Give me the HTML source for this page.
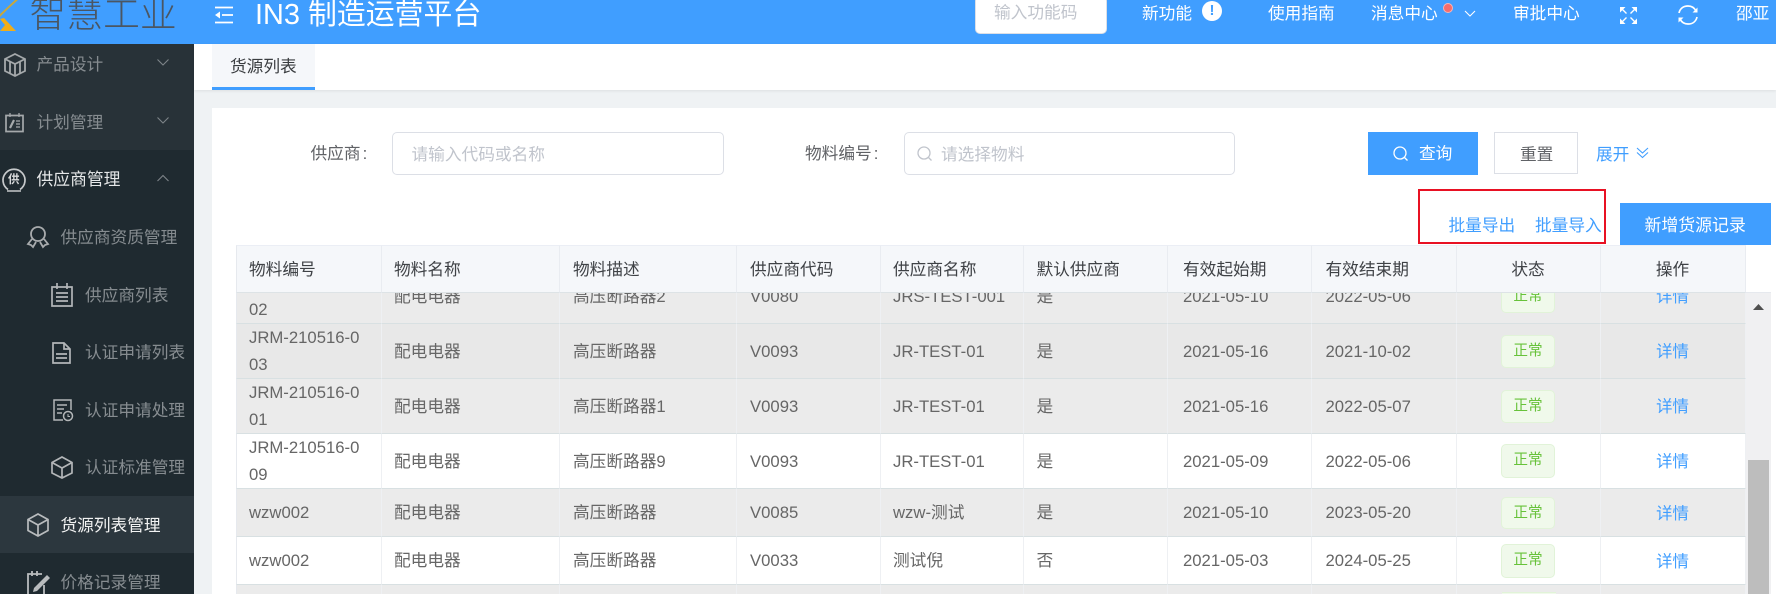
<!DOCTYPE html>
<html lang="zh"><head><meta charset="utf-8"><title>货源列表</title>
<style>
*{box-sizing:border-box}
html,body{margin:0;padding:0;width:1776px;height:594px;overflow:hidden;background:#fff}
body{position:relative;font-family:"Liberation Sans","Noto Sans CJK SC",sans-serif;font-size:16.7px;color:#606266}
.a{position:absolute}
.t{position:absolute;white-space:nowrap;line-height:20px;height:20px}
.w{color:#fff}.b{color:#409eff}.ph{color:#c0c4cc}
.m{color:#868c90}.mw{color:#e6e8e9}
svg{position:absolute;overflow:visible;fill:none}
table{border-collapse:separate;border-spacing:0;table-layout:fixed;position:absolute;left:236px;width:1509.500px}
td{padding:0 0 0 12.500px;border-right:1px solid #eef0f3;border-bottom:1px solid #d8e0e2;line-height:27px;font-size:16.7px;color:#666;overflow:hidden;vertical-align:middle;white-space:nowrap}
td.l{border-left:1px solid #e6e9ee;padding-left:12px}
td:nth-child(2){padding-left:12px}
td:nth-child(3),td:nth-child(4),td:nth-child(8){padding-left:13.500px}
td:nth-child(7){padding-left:15px}
td.c{padding:0;text-align:center}
tr.g td{background:#ebebeb}tr.h td{background:#e8e8e8}tr.n td{background:#fff}
tr.e td{border-bottom:0;line-height:0;font-size:0;height:9px}
.tag{display:inline-block;width:54px;height:33px;line-height:30px;background:#f0f9eb;border:1px solid #e1f3d8;border-radius:5px;color:#67c23a;font-size:14.6px;text-align:center;vertical-align:middle}
.d{color:#409eff;font-size:16.4px;position:relative;top:1px}
.th{position:absolute;top:245px;height:48px;background:#f5f7fa;border-top:1px solid #ebeef5;border-right:1px solid #e9ecf1;border-bottom:1px solid #dde3e6;line-height:48px;color:#3f4246;padding-left:12.500px;white-space:nowrap}
</style></head><body>

<!-- top bar -->
<div class="a" style="left:0;top:0;width:1776px;height:44px;background:#409eff"></div>
<svg style="left:0;top:0" width="18" height="32"><polygon points="15,0 0,14 0,17 8,9 18,0" fill="#c9a83a"/><polygon points="0,19 4,18 16,31 0,31 5,25" fill="#f0ad1a"/></svg>
<div class="t" style="left:29.500px;top:-5px;font-size:36.800px;line-height:40px;height:40px;color:#4a5663;font-weight:300">智慧工业</div>
<svg style="left:215px;top:6px" width="18" height="18" stroke="#fff" stroke-width="1.7"><path d="M0 1.500H18M7 9H18M0 16.500H18"/><path d="M5 5.500L0 9L5 12.500Z" fill="#fff" stroke="none"/></svg>
<div class="t w" style="left:255px;top:-3px;font-size:28.900px;line-height:36px;height:36px">IN3 制造运营平台</div>

<div class="a" style="left:975px;top:-4px;width:132px;height:38px;background:#fff;border:1px solid #dcdfe6;border-radius:5px"></div>
<div class="t ph" style="left:994px;top:3px">输入功能码</div>
<div class="t w" style="left:1142px;top:3.500px">新功能</div>
<div class="a" style="left:1202px;top:1px;width:20px;height:20px;border-radius:50%;background:#fff;color:#409eff;font-size:15px;line-height:19px;text-align:center;font-weight:bold">!</div>
<div class="t w" style="left:1268px;top:4px">使用指南</div>
<div class="t w" style="left:1371px;top:4px">消息中心</div>
<div class="a" style="left:1443px;top:3px;width:10px;height:10px;border-radius:50%;background:#f56c6c;border:1px solid #f7b4b4"></div>
<svg style="left:1464px;top:10px" width="12" height="7" stroke="#fff" stroke-width="1.1"><path d="M1 1L6 6L11 1"/></svg>
<div class="t w" style="left:1513px;top:4px">审批中心</div>
<svg style="left:1620px;top:7px" width="17" height="17" stroke="#fff" stroke-width="1.400"><path d="M2 2L6.500 6.500M15 2L10.500 6.500M2 15L6.500 10.500M15 15L10.500 10.500"/><path d="M0 0H5.500L0 5.500ZM17 0H11.500L17 5.500ZM0 17H5.500L0 11.500ZM17 17H11.500L17 11.500Z" fill="#fff" stroke="none"/></svg>
<svg style="left:1678px;top:5px" width="20" height="20" stroke="#fff" stroke-width="1.700"><path d="M1 8C2 3.500 5.500 1 10 1C13.500 1 16.500 3 18 6M19 12C18 16.500 14.500 19 10 19C6.500 19 3.500 17 2 14"/><path d="M19.500 2.500V7.500H14.500ZM.5 17.500V12.500H5.500Z" fill="#fff" stroke="none"/></svg>
<div class="t w" style="left:1736px;top:4px">邵亚</div>

<!-- sidebar -->
<div class="a" style="left:0;top:44px;width:194px;height:550px;background:#1f2a30"></div>
<div class="a" style="left:0;top:44px;width:194px;height:106px;background:#283238"></div>
<div class="a" style="left:0;top:496px;width:194px;height:57px;background:#2c373e"></div>

<svg style="left:4px;top:53px" width="22" height="24" stroke="#a5a9ab" stroke-width="1.8"><path d="M11 1L21 6V18L11 23L1 18V6ZM1 6L11 11L21 6M11 11V23M6 9V20M16 9V20"/></svg>
<div class="t m" style="left:36.500px;top:55px">产品设计</div>
<svg style="left:157px;top:59px" width="12" height="7" stroke="#7e8589" stroke-width="1.100"><path d="M.5 .5L6 6L11.500 .5"/></svg>

<svg style="left:5px;top:113px" width="19" height="19" stroke="#a5a9ab" stroke-width="1.700"><path d="M1 2.500H18V18.500H1Z"/><path d="M5 0V4M14 0V4M11 8H15M11 11H15M11 14H15" stroke-width="1.300"/><path d="M5 15L9 7" stroke-width="2.200"/></svg>
<div class="t m" style="left:36.500px;top:113px">计划管理</div>
<svg style="left:157px;top:117px" width="12" height="7" stroke="#7e8589" stroke-width="1.100"><path d="M.5 .5L6 6L11.500 .5"/></svg>

<svg style="left:2px;top:168px" width="24" height="24" stroke="#c6c9cb" stroke-width="1.700"><path d="M6 21.500A11 11 0 1 1 18 21.500"/><path d="M5 23H19" stroke-width="1.500"/></svg>
<div class="t" style="left:8px;top:170px;font-size:11.500px;color:#d9dbdc;font-weight:bold">供</div>
<div class="t mw" style="left:36.500px;top:170px;font-size:16.800px">供应商管理</div>
<svg style="left:157px;top:175px" width="12" height="7" stroke="#7e8589" stroke-width="1.100"><path d="M.5 6L6 .5L11.500 6"/></svg>

<svg style="left:27px;top:226px" width="22" height="22" stroke="#a8abad" stroke-width="1.800"><circle cx="11" cy="8" r="7"/><path d="M5 13L1 18L4 19L6 21L9 16M17 13L21 18L18 19L16 21L13 16"/></svg>
<div class="t m" style="left:60.500px;top:228px">供应商资质管理</div>

<svg style="left:51px;top:283px" width="22" height="24" stroke="#b3b6b8" stroke-width="1.700"><path d="M1 4H21V23H1ZM6 0V6M16 0V6M5 10H17M5 14H17M5 18H17"/></svg>
<div class="t m" style="left:85px;top:286px">供应商列表</div>

<svg style="left:52px;top:342px" width="19" height="22" stroke="#b3b6b8" stroke-width="1.700"><path d="M1 1H12L18 7V21H1ZM12 1V7H18M4 12H15M4 16H15"/></svg>
<div class="t m" style="left:85px;top:343px">认证申请列表</div>

<svg style="left:53px;top:399px" width="20" height="22" stroke="#b3b6b8" stroke-width="1.500"><path d="M10 21H1V1H18V11M4 6H14M4 10H11M4 14H9"/><circle cx="15" cy="17" r="4.500"/><path d="M15 15V17.500H17" stroke-width="1"/></svg>
<div class="t m" style="left:85px;top:400.500px">认证申请处理</div>

<svg style="left:51px;top:456px" width="22" height="23" stroke="#b3b6b8" stroke-width="1.700"><path d="M11 1L21 6.500V17L11 22L1 17V6.500ZM1 6.500L11 12L21 6.500M11 12V22"/></svg>
<div class="t m" style="left:85px;top:458px">认证标准管理</div>

<svg style="left:27px;top:513px" width="22" height="24" stroke="#b9bcbe" stroke-width="1.700"><path d="M11 1L21 6.500V17.500L11 23L1 17.500V6.500ZM1 6.500L11 12L21 6.500M11 12V23"/></svg>
<div class="t" style="left:60.500px;top:516px;color:#f2f3f3">货源列表管理</div>

<svg style="left:26px;top:571px;overflow:hidden" width="24" height="23" stroke="#b9bcbe" stroke-width="1.800"><path d="M16 3H2V24H18V14M6 0V5M11 0V5"/><path d="M8 17L21 4L24 7L11 20L7 21Z" fill="#b9bcbe" stroke="none"/></svg>
<div class="t m" style="left:60.500px;top:573px">价格记录管理</div>

<!-- tabs + page bg -->
<div class="a" style="left:194px;top:44px;width:1582px;height:550px;background:#eff2f4"></div>
<div class="a" style="left:194px;top:44px;width:1582px;height:46px;background:#fff;box-shadow:0 1px 3px rgba(0,0,0,.08)"></div>
<div class="a" style="left:212px;top:44px;width:103px;height:46px;background:#f5f7fa;border-bottom:3px solid #409eff"></div>
<div class="t" style="left:230px;top:57px;color:#3a3d40">货源列表</div>
<div class="a" style="left:212px;top:108px;width:1564px;height:486px;background:#fff"></div>

<!-- filter form -->
<div class="t" style="left:310.500px;top:144px">供应商<span style="margin-left:2px">:</span></div>
<div class="a" style="left:392px;top:132px;width:332px;height:43px;border:1px solid #dcdfe6;border-radius:5px"></div>
<div class="t ph" style="left:411.500px;top:145px">请输入代码或名称</div>
<div class="t" style="left:805px;top:144px">物料编号<span style="margin-left:2px">:</span></div>
<div class="a" style="left:904px;top:132px;width:331px;height:43px;border:1px solid #dcdfe6;border-radius:5px"></div>
<svg style="left:917px;top:146px" width="16" height="16" stroke="#c0c4cc" stroke-width="1.300"><circle cx="7" cy="7" r="6"/><path d="M11.500 11.500L14.500 14.500"/></svg>
<div class="t ph" style="left:941px;top:145px">请选择物料</div>
<div class="a" style="left:1368px;top:132px;width:110px;height:43px;background:#409eff"></div>
<svg style="left:1393px;top:146px" width="16" height="16" stroke="#fff" stroke-width="1.300"><circle cx="7" cy="7" r="6"/><path d="M11.500 11.500L14.500 14.500"/></svg>
<div class="t w" style="left:1419px;top:144px">查询</div>
<div class="a" style="left:1494px;top:132px;width:84px;height:42px;border:1px solid #dcdfe6"></div>
<div class="t" style="left:1520px;top:145px">重置</div>
<div class="t b" style="left:1596px;top:145px">展开</div>
<svg style="left:1636px;top:147px" width="13" height="12" stroke="#409eff" stroke-width="1.100"><path d="M1 1L6.500 6L12 1M1 5.500L6.500 10.500L12 5.500"/></svg>

<div class="t b" style="left:1448.500px;top:215.500px">批量导出</div>
<div class="t b" style="left:1535px;top:215.500px">批量导入</div>
<div class="a" style="left:1418px;top:189px;width:188px;height:55px;border:2px solid #e81123"></div>
<div class="a" style="left:1620px;top:203px;width:151px;height:42px;background:#409eff"></div>
<div class="t w" style="left:1644.500px;top:216px;font-size:16.900px">新增货源记录</div>

<!-- table body -->
<div class="a" style="left:0;top:293px;width:1776px;height:301px;overflow:hidden">
<table style="top:-24px">
<colgroup><col style="width:146px"><col style="width:177.500px"><col style="width:177px"><col style="width:144px"><col style="width:143.500px"><col style="width:144px"><col style="width:144px"><col style="width:144.500px"><col style="width:144px"><col style="width:145px"></colgroup>
<tr class="g" style="height:55px"><td class="l">JRM-210516-0<br>02</td><td>配电电器</td><td>高压断路器2</td><td>V0080</td><td>JRS-TEST-001</td><td>是</td><td>2021-05-10</td><td>2022-05-06</td><td class="c"><span class="tag">正常</span></td><td class="c"><span class="d">详情</span></td></tr>
<tr class="h" style="height:55px"><td class="l">JRM-210516-0<br>03</td><td>配电电器</td><td>高压断路器</td><td>V0093</td><td>JR-TEST-01</td><td>是</td><td>2021-05-16</td><td>2021-10-02</td><td class="c"><span class="tag">正常</span></td><td class="c"><span class="d">详情</span></td></tr>
<tr class="g" style="height:55px"><td class="l">JRM-210516-0<br>01</td><td>配电电器</td><td>高压断路器1</td><td>V0093</td><td>JR-TEST-01</td><td>是</td><td>2021-05-16</td><td>2022-05-07</td><td class="c"><span class="tag">正常</span></td><td class="c"><span class="d">详情</span></td></tr>
<tr class="n" style="height:55px"><td class="l">JRM-210516-0<br>09</td><td>配电电器</td><td>高压断路器9</td><td>V0093</td><td>JR-TEST-01</td><td>是</td><td>2021-05-09</td><td>2022-05-06</td><td class="c"><span class="tag" style="height:34px;line-height:30px">正常</span></td><td class="c"><span class="d">详情</span></td></tr>
<tr class="g" style="height:48px"><td class="l">wzw002</td><td>配电电器</td><td>高压断路器</td><td>V0085</td><td>wzw-测试</td><td>是</td><td>2021-05-10</td><td>2023-05-20</td><td class="c"><span class="tag" style="height:32px">正常</span></td><td class="c"><span class="d">详情</span></td></tr>
<tr class="n" style="height:48px"><td class="l">wzw002</td><td>配电电器</td><td>高压断路器</td><td>V0033</td><td>测试倪</td><td>否</td><td>2021-05-03</td><td>2024-05-25</td><td class="c"><span class="tag" style="height:34px;line-height:30px">正常</span></td><td class="c"><span class="d">详情</span></td></tr>
<tr class="g e" style="height:9px"><td class="l"></td><td></td><td></td><td></td><td></td><td></td><td></td><td></td><td></td><td></td></tr>
</table>
</div>
<div class="a" style="left:1501.500px;top:592px;width:54px;height:2px;background:#f0f9eb;border-top:1px solid #e1f3d8"></div>

<!-- table header -->
<div class="th" style="left:236px;width:146px;border-left:1px solid #e6e9ee;padding-left:12px">物料编号</div>
<div class="th" style="left:382px;width:177.500px;padding-left:12px">物料名称</div>
<div class="th" style="left:559.500px;width:177px;padding-left:13.500px">物料描述</div>
<div class="th" style="left:736.500px;width:144px;padding-left:13.500px">供应商代码</div>
<div class="th" style="left:880.500px;width:143.500px">供应商名称</div>
<div class="th" style="left:1024px;width:144px">默认供应商</div>
<div class="th" style="left:1168px;width:144px;padding-left:15px">有效起始期</div>
<div class="th" style="left:1312px;width:144.500px;padding-left:13.500px">有效结束期</div>
<div class="th" style="left:1456.500px;width:144px;padding:0;text-align:center">状态</div>
<div class="th" style="left:1600.500px;width:145px;padding:0;text-align:center">操作</div>

<!-- scrollbar -->
<div class="a" style="left:1745.500px;top:293px;width:25.500px;height:301px;background:#f0f0f2"></div>
<div class="a" style="left:1745.500px;top:292px;width:25.500px;height:1px;background:#e6e9ee"></div>
<div class="a" style="left:1748px;top:460px;width:21px;height:134px;background:#bdbdbd"></div>
<svg style="left:1753px;top:304px" width="11" height="6"><path d="M5.500 0L11 6H0Z" fill="#505050"/></svg>
</body></html>
